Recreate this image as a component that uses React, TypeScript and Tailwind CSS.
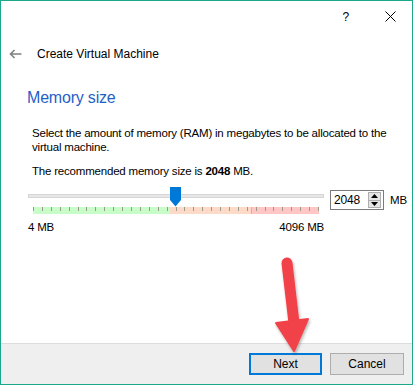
import React from "react";

const TICKS = Array.from({ length: 33 });

function SpinBox() {
  return (
    <div className="ml-[6px] mt-[3px] flex h-[20px] w-[54px] items-center border border-[#7a7a7a] bg-white pl-[3px] pr-[2px]">
      <span className="flex-1 text-[12px] leading-[14px] text-black">2048</span>
      <div className="flex h-[16px] w-[13px] flex-col">
        <div className="flex flex-1 items-center justify-center border border-[#adadad] bg-[#e5e5e5]">
          <svg width="7" height="4" viewBox="0 0 7 4">
            <path d="M0 4 L3.5 0 L7 4 Z" fill="#000" />
          </svg>
        </div>
        <div className="-mt-px flex flex-1 items-center justify-center border border-[#adadad] bg-[#e5e5e5]">
          <svg width="7" height="4" viewBox="0 0 7 4">
            <path d="M0 0 L7 0 L3.5 4 Z" fill="#000" />
          </svg>
        </div>
      </div>
    </div>
  );
}

function Slider() {
  return (
    <div className="relative h-[28px] w-[296px]">
      <div className="mt-[7px] h-[4px] w-full border border-[#d6d6d6] bg-[#e7e7e7]" />
      <div className="ml-[5px] mt-[9px] flex h-[7px] w-[286px]">
        <div className="h-full w-[137px] bg-[#c8fcc8]" />
        <div className="h-full w-[81px] bg-[#fdd9c8]" />
        <div className="h-full flex-1 border-l border-[#f2a0a0] bg-[#ffc6c6]" />
      </div>
      <div className="absolute left-[5px] top-[20px] flex h-[4px] w-[286px] justify-between">
        {TICKS.map((_, i) => (
          <div key={i} className="h-full w-px bg-[#9a9a8c]" />
        ))}
      </div>
      {/* handle */}
      <svg className="absolute left-[142px] top-0" width="11" height="20" viewBox="0 0 11 20">
        <path d="M0 0 H11 V13 L5.5 19.5 L0 13 Z" fill="#0078d7" />
      </svg>
    </div>
  );
}

function RedArrow() {
  return (
    <svg className="pointer-events-none absolute left-0 top-0" width="413" height="385" viewBox="0 0 413 385">
      <defs>
        <filter id="sh" x="-50%" y="-50%" width="200%" height="200%">
          <feDropShadow dx="1" dy="2" stdDeviation="1.5" floodColor="#000" floodOpacity="0.3" />
        </filter>
      </defs>
      <g filter="url(#sh)">
        <line x1="286" y1="262" x2="293" y2="322" stroke="#f2434a" strokeWidth="11" strokeLinecap="round" />
        <path d="M275 322 L307 318 L293 350 Z" fill="#f2434a" stroke="#f2434a" strokeWidth="2" strokeLinejoin="round" />
      </g>
    </svg>
  );
}

export default function App() {
  return (
    <div className="bg-white" style={{ fontFamily: '"Liberation Sans", Arial, sans-serif' }}>
      <div className="relative flex h-[385px] w-[413px] flex-col border border-[#1aa88a] bg-white text-[11.5px] leading-[14px] tracking-[-0.2px] text-black">
        {/* title bar */}
        <div className="flex h-[31px] items-center justify-end">
          <span className="mr-[36px] text-[12px] text-black">?</span>
          <svg className="mr-[16px]" width="11" height="11" viewBox="0 0 11 11">
            <path d="M0.5 0.5 L10.5 10.5 M10.5 0.5 L0.5 10.5" stroke="#000" strokeWidth="1" />
          </svg>
        </div>

        {/* header */}
        <div className="mt-[14px] flex h-[16px] items-center">
          <svg className="ml-[8px]" width="13" height="10" viewBox="0 0 13 10">
            <path d="M12.5 5 H1.5 M5.5 1 L1.5 5 L5.5 9" stroke="#808080" strokeWidth="1.6" fill="none" />
          </svg>
          <span className="ml-[15px] text-[12px] leading-[16px] tracking-normal">Create Virtual Machine</span>
        </div>

        {/* content */}
        <div className="mt-[26px] pl-[26px] text-[16px] leading-[20px] tracking-[-0.2px] text-[#1f5fc8]">Memory size</div>
        <p className="mt-[18px] whitespace-nowrap pl-[31px]">
          Select the amount of memory (RAM) in megabytes to be allocated to the
          <br />
          virtual machine.
        </p>
        <p className="mt-[10px] pl-[31px]">
          The recommended memory size is <b>2048</b> MB.
        </p>

        <div className="mt-[9px] flex pl-[27px]">
          <Slider />
          <SpinBox />
          <span className="ml-[6px] mt-[6px]">MB</span>
        </div>
        <div className="mt-[5px] flex w-[323px] justify-between pl-[27px]">
          <span>4 MB</span>
          <span>4096 MB</span>
        </div>

        <div className="flex-1" />

        {/* bottom bar */}
        <div className="flex h-[41px] items-start justify-end gap-[8px] border-t border-[#dcdcdc] bg-[#efefef] pr-[8px] pt-[9px]">
          <button className="h-[22px] w-[73px] border-2 border-[#0078d7] bg-[#e1e1e1] text-[12px] tracking-normal text-black">
            Next
          </button>
          <button className="h-[22px] w-[74px] border border-[#adadad] bg-[#e1e1e1] text-[12px] tracking-normal text-black">
            Cancel
          </button>
        </div>

        <RedArrow />
      </div>
    </div>
  );
}
